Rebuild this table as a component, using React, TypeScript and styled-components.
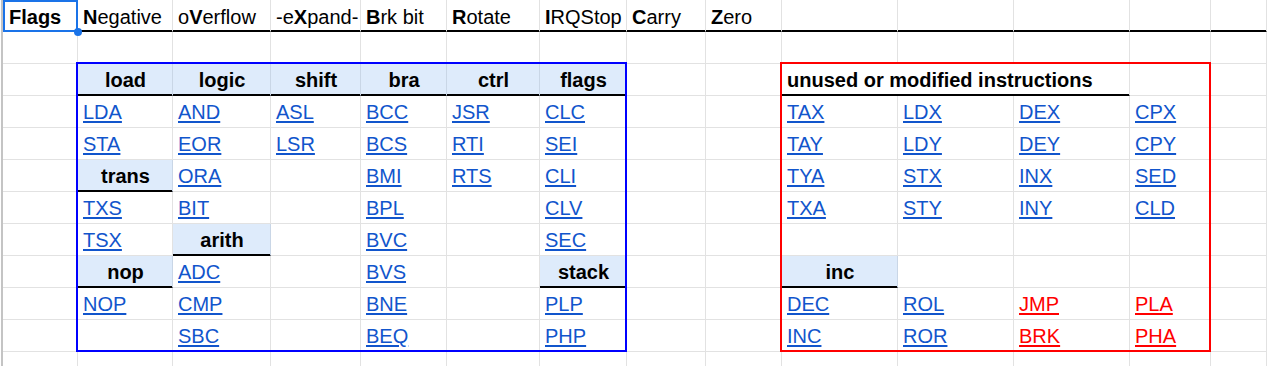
import React from "react";
import styled, { createGlobalStyle, css } from "styled-components";

const GlobalStyle = createGlobalStyle`
  html, body { margin: 0; padding: 0; background: #fff; overflow: hidden; }
  body { font-family: "Liberation Sans", Arial, sans-serif; }
`;

const GRID = "#e2e2e2";
const COLS = [75, 95, 98, 90, 86, 93, 87, 79, 76, 116, 116, 116, 81];
const BLUE_COLS = COLS.slice(1, 7);
const RED_COLS = COLS.slice(9, 13);

const Sheet = styled.div`
  display: grid;
  grid-template-columns: ${COLS.map((w) => w + "px").join(" ")} 1fr;
  grid-auto-rows: 32px;
  width: 1264px;
  margin-left: 1px;
  border-left: 2px solid #c4c4c4;
  font-family: "Liberation Sans", Arial, sans-serif;
  font-size: 20px;
  color: #000;
`;

type CellProps = {
  $rule?: boolean;
  $head?: boolean;
  $bold?: boolean;
  $span?: number;
  $top?: boolean;
};

const Cell = styled.div<CellProps>`
  box-sizing: border-box;
  min-width: 0;
  border-right: 1px solid ${(p) => (p.$head ? "#c9d6e6" : GRID)};
  border-bottom: 1px solid ${GRID};
  background: ${(p) => (p.$head ? "#deebfb" : "#fff")};
  padding: 1px 4px 0 5px;
  line-height: 30px;
  white-space: nowrap;
  text-align: ${(p) => (p.$head ? "center" : "left")};
  font-weight: ${(p) => (p.$head || p.$bold ? 700 : 400)};
  ${(p) =>
    p.$top &&
    css`
      padding-top: 3px;
      line-height: 28px;
    `}
  ${(p) =>
    p.$rule &&
    css`
      border-bottom-color: #000;
      box-shadow: inset 0 -1px 0 #000;
    `}
  ${(p) =>
    p.$span &&
    css`
      grid-column: span ${p.$span};
    `}
`;

const SelectedCell = styled(Cell)`
  position: relative;
  padding-left: 6px;
  &::after {
    content: "";
    position: absolute;
    top: 0;
    left: 0;
    right: -1px;
    bottom: -1px;
    border: 2px solid #1a73e8;
    pointer-events: none;
  }
  &::before {
    content: "";
    position: absolute;
    width: 8px;
    height: 8px;
    border-radius: 50%;
    background: #1a73e8;
    right: -5px;
    bottom: -5px;
    z-index: 2;
  }
`;

const Block = styled.div<{ $cols: number[]; $frame: string }>`
  grid-column: span ${(p) => p.$cols.length};
  grid-row: span 9;
  display: grid;
  grid-template-columns: ${(p) => p.$cols.map((w) => w + "px").join(" ")};
  grid-auto-rows: 32px;
  position: relative;
  &::after {
    content: "";
    position: absolute;
    top: -2px;
    left: -2px;
    right: 0;
    bottom: 0;
    border: 2px solid ${(p) => p.$frame};
    pointer-events: none;
  }
`;

const Link = styled.a<{ $red?: boolean }>`
  color: ${(p) => (p.$red ? "#ff0000" : "#1155cc")};
  text-decoration: underline;
  text-decoration-thickness: 2px;
  text-underline-offset: 2px;
`;

const FLAGS: [string, string][] = [
  ["N", "egative"],
  ["", "o|V|erflow"],
  ["", "-e|X|pand-"],
  ["B", "rk bit"],
  ["R", "otate"],
  ["I", "RQStop"],
  ["C", "arry"],
  ["Z", "ero"],
];

const BLUE: string[][] = [
  ["#load", "#logic", "#shift", "#bra", "#ctrl", "#flags"],
  ["LDA", "AND", "ASL", "BCC", "JSR", "CLC"],
  ["STA", "EOR", "LSR", "BCS", "RTI", "SEI"],
  ["#trans", "ORA", "", "BMI", "RTS", "CLI"],
  ["TXS", "BIT", "", "BPL", "", "CLV"],
  ["TSX", "#arith", "", "BVC", "", "SEC"],
  ["#nop", "ADC", "", "BVS", "", "#stack"],
  ["NOP", "CMP", "", "BNE", "", "PLP"],
  ["", "SBC", "", "BEQ", "", "PHP"],
];

const RED: string[][] = [
  ["TAX", "LDX", "DEX", "CPX"],
  ["TAY", "LDY", "DEY", "CPY"],
  ["TYA", "STX", "INX", "SED"],
  ["TXA", "STY", "INY", "CLD"],
  ["", "", "", ""],
  ["#inc", "", "", ""],
  ["DEC", "ROL", "!JMP", "!PLA"],
  ["INC", "ROR", "!BRK", "!PHA"],
];

function FlagLabel({ lead, rest }: { lead: string; rest: string }) {
  if (lead) {
    return (
      <>
        <b>{lead}</b>
        {rest}
      </>
    );
  }
  const [a, b, c] = rest.split("|");
  return (
    <>
      {a}
      <b>{b}</b>
      {c}
    </>
  );
}

function DataCell({ value }: { value: string }) {
  if (value.startsWith("#")) {
    return (
      <Cell $head $rule>
        {value.slice(1)}
      </Cell>
    );
  }
  if (value.startsWith("!")) {
    return (
      <Cell>
        <Link href="#" $red>
          {value.slice(1)}
        </Link>
      </Cell>
    );
  }
  return <Cell>{value ? <Link href="#">{value}</Link> : null}</Cell>;
}

function EmptyRow() {
  return (
    <>
      {Array.from({ length: 14 }, (_, i) => (
        <Cell key={i} />
      ))}
    </>
  );
}

export default function App() {
  return (
    <>
      <GlobalStyle />
      <Sheet>
        {/* row 0: flag legend */}
        <SelectedCell $top $rule $bold>
          Flags
        </SelectedCell>
        {FLAGS.map(([lead, rest], i) => (
          <Cell key={i} $top $rule>
            <FlagLabel lead={lead} rest={rest} />
          </Cell>
        ))}
        {Array.from({ length: 5 }, (_, i) => (
          <Cell key={"t" + i} $top $rule />
        ))}

        {/* row 1 */}
        <EmptyRow />

        {/* rows 2-10 */}
        <Cell />
        <Block $cols={BLUE_COLS} $frame="#0000ff">
          {BLUE.flatMap((row, r) =>
            row.map((v, c) => <DataCell key={r + "-" + c} value={v} />)
          )}
        </Block>
        <Cell />
        <Cell />
        <Block $cols={RED_COLS} $frame="#ff0000">
          <Cell $span={3} $bold $rule>
            unused or modified instructions
          </Cell>
          <Cell />
          {RED.flatMap((row, r) =>
            row.map((v, c) => <DataCell key={r + "-" + c} value={v} />)
          )}
        </Block>
        <Cell />
        {Array.from({ length: 8 }, (_, r) => (
          <React.Fragment key={r}>
            <Cell />
            <Cell />
            <Cell />
            <Cell />
          </React.Fragment>
        ))}

        {/* row 11 */}
        <EmptyRow />
      </Sheet>
    </>
  );
}
